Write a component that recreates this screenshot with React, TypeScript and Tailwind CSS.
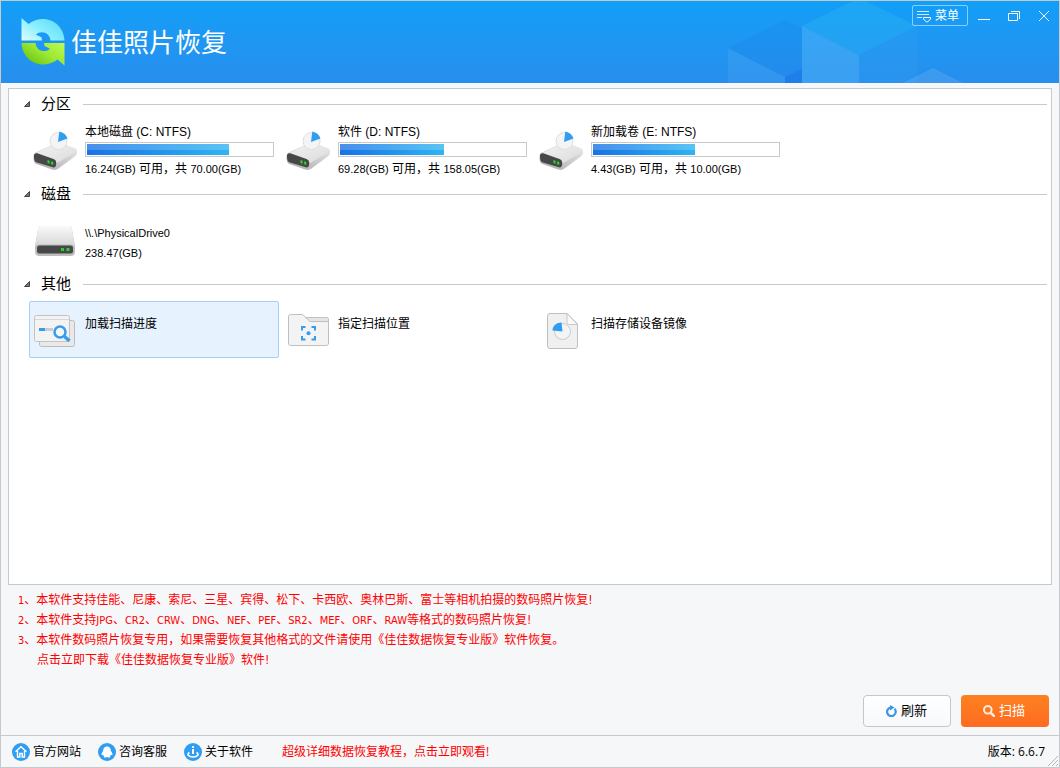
import React, { useState } from "react";

interface Volume {
  name: string;
  label: string;
  info: string;
  used: number;
}

const VOLUMES: Volume[] = [
  { name: "本地磁盘", label: "(C: NTFS)", info: "16.24(GB) 可用，共 70.00(GB)", used: 77 },
  { name: "软件", label: "(D: NTFS)", info: "69.28(GB) 可用，共 158.05(GB)", used: 56 },
  { name: "新加载卷", label: "(E: NTFS)", info: "4.43(GB) 可用，共 10.00(GB)", used: 55 },
];

const NOTES = [
  "1、本软件支持佳能、尼康、索尼、三星、宾得、松下、卡西欧、奥林巴斯、富士等相机拍摄的数码照片恢复!",
  "2、本软件支持JPG、CR2、CRW、DNG、NEF、PEF、SR2、MEF、ORF、RAW等格式的数码照片恢复!",
  "3、本软件数码照片恢复专用，如果需要恢复其他格式的文件请使用《佳佳数据恢复专业版》软件恢复。",
];

// Latin runs are set one pixel smaller than the Chinese around them.
const Mixed: React.FC<{ text: string }> = ({ text }) => (
  <>
    {text.split(/([\x22-\x7e]+)/).map((part, i) =>
      i % 2 ? (
        <span key={i} className="text-[11px] leading-none">
          {part}
        </span>
      ) : (
        part
      )
    )}
  </>
);

const Logo = () => {
  const arrow =
    "M.5 0 7.5 6C12 2.4 17 1 22 1c12 0 21 9.500 21.500 21.500H29.500C29 17.500 25.500 14.300 21 14.300c-2.500 0-4.500.7-6 2.400l5.500 2.600.5 3.200H.5z";
  return (
    <svg className="h-12 w-11 shrink-0" viewBox="0 0 44 48" aria-hidden="true">
      <defs>
        <linearGradient id="logo-top" x1="0" y1="1" x2="1" y2="0.3">
          <stop offset="0" stopColor="#e4fdff" />
          <stop offset="0.5" stopColor="#8cf0fe" />
          <stop offset="1" stopColor="#5fdcfb" />
        </linearGradient>
        {/* drawn rotated by 180 degrees, so the light end comes out top right */}
        <linearGradient id="logo-bottom" x1="0" y1="1" x2="1" y2="0.2">
          <stop offset="0" stopColor="#bdfb55" />
          <stop offset="0.5" stopColor="#9be832" />
          <stop offset="1" stopColor="#66c010" />
        </linearGradient>
      </defs>
      <path d={arrow} fill="url(#logo-top)" />
      <path d={arrow} fill="url(#logo-bottom)" transform="rotate(180 22 23.7)" />
    </svg>
  );
};

const HeaderCubes = () => (
  <svg className="absolute right-0 top-0 h-full w-[332px]" viewBox="0 0 332 82" aria-hidden="true">
    <path d="M58 19 1 47l57 29 17-8V27z" fill="#1b7fe9" fillOpacity="0.25" />
    <path d="M1 47v35h57v-6z" fill="#fff" fillOpacity="0.06" />
    <path d="M58 76v6h17V68z" fill="#1d78e8" fillOpacity="0.7" />
    <path d="M132-3 75 25l57 29 58-29z" fill="#2fb8f4" fillOpacity="0.35" />
    <path d="M75 25v57h57V54z" fill="#5cb8f8" fillOpacity="0.4" />
    <path d="M132 54v28h58V25z" fill="#2f9af0" fillOpacity="0.4" />
    <path d="m206 67-30 15h60z" fill="#fff" fillOpacity="0.1" />
  </svg>
);

const VolumeIcon = () => (
  <svg className="mt-px h-10 w-11 shrink-0" viewBox="0 0 44 40" aria-hidden="true">
    <defs>
      <linearGradient id="vol-top" x1="0" y1="0" x2="1" y2="1">
        <stop offset="0" stopColor="#f2f2f2" />
        <stop offset="1" stopColor="#dcdcdc" />
      </linearGradient>
      <linearGradient id="vol-side" x1="0" y1="1" x2="1" y2="0">
        <stop offset="0" stopColor="#a8a8a8" />
        <stop offset="1" stopColor="#ececec" />
      </linearGradient>
    </defs>
    <path d="M.5 25.500c0-2 .8-3 2.500-4L22 12.500c2-1 5-1 7 0l13 5c1.500.6 2 1.800 2 3.500 0 2.500-.8 3.500-2.500 4.800L25.500 37.500c-2 1.500-4 1.700-6.500 1L3.500 33C1 32 .5 30 .5 25.500z" fill="url(#vol-side)" />
    <path d="M2 22.500 22 12.500c2-1 5-1 7 0l13 5c2 .8 2 2.200.5 3.500L26 31c-1.500 1-3 1-4.500.5z" fill="url(#vol-top)" />
    <path d="M1 25c0-2.500 1.500-3.200 4-2.400l15.500 5.300c2 .7 2.800 2 2.700 4.500-.1 3.500-1.400 4.600-4.200 3.700L4 31.500c-2.300-.8-3-2.500-3-6.500z" fill="#474747" />
    <path d="m14.500 29 2 .7v3l-2-.7zm3.700 1.200 2 .7v3l-2-.7z" fill="#22e02c" />
    <circle cx="25.500" cy="10" r="8.500" fill="#f3f4f6" stroke="#dedfe2" />
    <path d="m25 11 1.300-10.500A11 11 0 0 1 34.500 7.500z" fill="#2f9df1" />
  </svg>
);

const DriveIcon = () => (
  <svg className="mt-px h-10 w-11 shrink-0" viewBox="0 0 44 40" aria-hidden="true">
    <defs>
      <linearGradient id="drive-top" x1="0" y1="0" x2="0" y2="1">
        <stop offset="0" stopColor="#fafafa" />
        <stop offset="1" stopColor="#d5d5d5" />
      </linearGradient>
    </defs>
    <path d="M8.500 5h27c2 0 3 1 3.400 3L42 25.500v5c0 3-1.500 4.500-4 4.500H6c-2.500 0-4-1.500-4-4.500v-5L5.100 8c.4-2 1.400-3 3.400-3z" fill="#bdbdbd" />
    <path d="M8.500 5h27c2 0 3 1 3.400 3L42 26c-1-2-2.500-2.500-4.500-2.500h-31C4.500 23.500 3 24 2 26L5.100 8c.4-2 1.400-3 3.400-3z" fill="url(#drive-top)" />
    <rect x="4" y="24.500" width="36" height="8" rx="2.500" fill="#474747" />
    <path d="M28 27h3v3h-3zm5.500 0h3v3h-3z" fill="#22d42c" />
  </svg>
);

const ProgressIcon = () => (
  <svg className="mt-px h-10 w-11 shrink-0" viewBox="0 0 44 40" aria-hidden="true">
    <rect x="6.500" y="9.500" width="35" height="26" rx="2" fill="#e9e9e9" stroke="#bcbcbc" />
    <rect x="1.500" y="4.500" width="35" height="26" rx="2" fill="#f3f3f3" stroke="#c3c3c3" />
    <path d="M2 8.500h34" stroke="#d8d8d8" />
    <path d="M6 17h6v3H6z" fill="#2f9df1" />
    <path d="M12 17h8v3h-8z" fill="#c9ccd0" />
    <circle cx="27" cy="21" r="5.500" fill="#f0f6fb" stroke="#3a9bea" strokeWidth="2.500" />
    <path d="m31.500 25.500 5 4.500" stroke="#3a9bea" strokeWidth="3.500" />
  </svg>
);

const FolderIcon = () => (
  <svg className="mt-px h-10 w-11 shrink-0" viewBox="0 0 44 40" aria-hidden="true">
    <path d="M20 6.500h21c1 0 1.500.5 1.500 1.500v7H20z" fill="#e4e4e4" stroke="#c3c3c3" />
    <path d="M2.500 6c0-1.500.7-2.500 2-2.500h12L24 10.500h17c1 0 1.500.5 1.500 1.500v20c0 1.500-.7 2.500-2 2.500h-36c-1.300 0-2-1-2-2.500z" fill="#f3f3f3" stroke="#bfbfbf" />
    <path d="M16 19.500V16h3.500m6 0H29v3.500m0 5.500v3.500h-3.500m-6 0H16V25" fill="none" stroke="#2f9df1" strokeWidth="2" />
    <circle cx="22.500" cy="22.200" r="2" fill="#2f9df1" />
  </svg>
);

const ImageFileIcon = () => (
  <svg className="mt-px h-10 w-11 shrink-0" viewBox="0 0 44 40" aria-hidden="true">
    <path d="M11 2.500h17l10.500 10.500V35c0 1.500-1 2.500-2.500 2.500H11c-1.500 0-2.500-1-2.500-2.500V5c0-1.500 1-2.500 2.500-2.500z" fill="#f0f0f0" stroke="#bfbfbf" />
    <path d="M28 2.500V11c0 1.500 1 2.500 2.500 2.500h8z" fill="#fafafa" stroke="#c6c6c6" />
    <circle cx="23.500" cy="20.500" r="8" fill="#f3f4f6" stroke="#c9c9c9" />
    <path d="M23.500 20.500 22.500 11.500c-5 0-9 3.500-9 8z" fill="#2f9df1" />
  </svg>
);

const HomeIcon = () => (
  <svg className="size-[18px]" viewBox="0 0 18 18" aria-hidden="true">
    <circle cx="9" cy="9" r="9" fill="#2f9df1" />
    <path d="m3.500 8.800 5.500-5 5.500 5M5.500 8v6h2.300v-3.500h2.400V14h2.300V8" fill="none" stroke="#fff" strokeWidth="1.400" />
  </svg>
);

const ServiceIcon = () => (
  <svg className="size-[18px]" viewBox="0 0 18 18" aria-hidden="true">
    <circle cx="9" cy="9" r="9" fill="#2f9df1" />
    <path d="M9 3.500c2.500 0 3.800 1.700 3.800 4 0 1 1.900 2.500 1.700 4.200-.1.700-.8.500-1.500 0-.2.700-.5 1-1 1.500.5.500.3 1.300-.6 1.300-1 0-1.700-.2-2.400-.6-.7.400-1.400.6-2.400.6-.9 0-1.100-.8-.6-1.300-.5-.5-.8-.8-1-1.500-.7.500-1.400.7-1.500 0-.2-1.700 1.700-3.200 1.700-4.200 0-2.300 1.300-4 3.800-4z" fill="#fff" />
  </svg>
);

const AboutIcon = () => (
  <svg className="size-[18px]" viewBox="0 0 18 18" aria-hidden="true">
    <circle cx="9" cy="9" r="9" fill="#2f9df1" />
    <path d="M8 3h2v2H8zm0 3h2v5H8z" fill="#fff" />
    <path d="M5.500 9.500c-3 1.500-1.500 4.500 3.500 4.500s6.500-3 3.500-4.500" fill="none" stroke="#fff" strokeWidth="1.600" />
  </svg>
);

interface SectionProps {
  title: string;
  children: React.ReactNode;
}

const Section: React.FC<SectionProps> = ({ title, children }) => {
  const [open, setOpen] = useState(true);

  return (
    <section className="mb-px">
      <h2 className="flex h-8 items-center gap-3 pb-0.5 pl-[14px] pr-1">
        <button
          type="button"
          aria-expanded={open}
          onClick={() => setOpen(!open)}
          className="flex items-center gap-[10px] text-[15px] leading-5"
        >
          <svg className="size-2" viewBox="0 0 8 8" aria-hidden="true">
            <path d="M6.500 1.500v5h-5z" fill="#777" stroke="#444" />
          </svg>
          {title}
        </button>
        <span className="h-px flex-1 bg-[#c8c9cc]" />
      </h2>
      {open && <div className="flex flex-wrap gap-x-[3px] px-5">{children}</div>}
    </section>
  );
};

interface ItemProps {
  icon: React.ReactNode;
  selected?: boolean;
  onClick?: () => void;
  children: React.ReactNode;
}

const Item: React.FC<ItemProps> = ({ icon, selected, onClick, children }) => (
  <button
    type="button"
    onClick={onClick}
    className={
      selected
        ? "flex h-[57px] w-[250px] gap-2 rounded-xs border border-[#a5d0f7] bg-[#e6f2fd] px-[3px] pt-2 text-left"
        : "flex h-[57px] w-[250px] gap-2 rounded-xs border border-transparent px-[3px] pt-2 text-left"
    }
  >
    {icon}
    {children}
  </button>
);

const OTHER = [
  { text: "加载扫描进度", icon: <ProgressIcon /> },
  { text: "指定扫描位置", icon: <FolderIcon /> },
  { text: "扫描存储设备镜像", icon: <ImageFileIcon /> },
];

const App: React.FC = () => {
  const [selected, setSelected] = useState("加载扫描进度");

  return (
    <div className="flex min-h-screen flex-col border border-[#c8c9cc] bg-[#f5f7f9] font-['Liberation_Sans','Noto_Sans_CJK_SC',sans-serif] text-xs text-black">
      <header className="relative flex h-[82px] items-start justify-between bg-linear-to-b from-[#109ff8] to-[#278eed] text-white">
        <HeaderCubes />
        <div className="flex items-center gap-[6px] pl-5 pt-[17px]">
          <Logo />
          <h1 className="pb-0.5 font-['Noto_Sans_CJK_SC',sans-serif] text-[26px] font-normal leading-8">佳佳照片恢复</h1>
        </div>
        <div className="relative flex items-center pr-[3px] pt-1">
          <button
            type="button"
            className="mr-1 flex h-[21px] w-14 items-center gap-1 rounded-xs border border-white/50 pl-1"
          >
            <svg className="h-4 w-[14px]" viewBox="0 0 14 16" fill="none" stroke="#fff" aria-hidden="true">
              <path d="M0 3.500h12M0 6.500h12M0 9.500h5" strokeOpacity="0.8" />
              <path d="M6.500 9.500h7V11l-3 3h-1l-3-3z" />
            </svg>
            菜单
          </button>
          <button type="button" aria-label="最小化" className="flex h-5 w-6 items-center justify-center">
            <svg className="size-3" viewBox="0 0 12 12" stroke="#fff" aria-hidden="true">
              <path d="M0 9.500h12" />
            </svg>
          </button>
          <button type="button" aria-label="还原" className="ml-[6px] flex h-5 w-6 items-center justify-center">
            <svg className="size-3" viewBox="0 0 12 12" fill="none" stroke="#fff" aria-hidden="true">
              <path d="M.5 3.500h9v7h-9zM3 1.500h8.500V9" />
            </svg>
          </button>
          <button type="button" aria-label="关闭" className="ml-[6px] flex h-5 w-6 items-center justify-center">
            <svg className="size-3" viewBox="0 0 12 12" stroke="#fff" aria-hidden="true">
              <path d="m1 1 10 10M11 1 1 11" />
            </svg>
          </button>
        </div>
      </header>

      <main className="mx-[7px] mt-[5px] flex-1 border border-[#c8c9cc] bg-white">
        <Section title="分区">
          {VOLUMES.map((v) => (
            <Item key={v.name} icon={<VolumeIcon />} selected={selected === v.name} onClick={() => setSelected(v.name)}>
              <span className="-mt-1 flex flex-col">
                <span className="h-4 leading-3">
                  {v.name} {v.label}
                </span>
                <span
                  role="progressbar"
                  aria-label={v.name}
                  aria-valuenow={v.used}
                  className="flex h-[15px] w-[189px] border border-[#c8c9cc] bg-white p-px"
                >
                  <span
                    className="bg-linear-to-r from-[#1b72e6] to-[#2fb4f3]"
                    style={{ width: `${v.used}%` }}
                  >
                    <span className="block h-1/2 bg-white/20" />
                  </span>
                </span>
                <span className="mt-1 leading-4">
                  <Mixed text={v.info} />
                </span>
              </span>
            </Item>
          ))}
        </Section>

        <Section title="磁盘">
          <Item icon={<DriveIcon />} selected={selected === "drive0"} onClick={() => setSelected("drive0")}>
            <span className="flex flex-col pt-[3px] text-[11px] leading-5">
              <span>\\.\PhysicalDrive0</span>
              <span>238.47(GB)</span>
            </span>
          </Item>
        </Section>

        <Section title="其他">
          {OTHER.map((o) => (
            <Item key={o.text} icon={o.icon} selected={selected === o.text} onClick={() => setSelected(o.text)}>
              <span className="pt-1 leading-5">{o.text}</span>
            </Item>
          ))}
        </Section>
      </main>

      <div className="mt-[5px] px-[17px] font-['DejaVu_Sans_Condensed','Noto_Sans_CJK_SC',sans-serif] leading-5 text-[#f00]">
        {NOTES.map((note) => (
          <p key={note}>
            <Mixed text={note} />
          </p>
        ))}
        <a href="#download" className="block pl-[19px]">
          点击立即下载《佳佳数据恢复专业版》软件!
        </a>
      </div>

      <div className="mb-2 mt-[25px] flex justify-end gap-[10px] px-[10px] text-[13px]">
        <button
          type="button"
          className="flex h-8 w-22 items-center justify-center gap-1 rounded-sm border border-[#c5c7cc] bg-linear-to-b from-white to-[#f8f9fb] pr-0.5"
        >
          <svg className="size-3" viewBox="0 0 12 12" aria-hidden="true">
            <path d="M9.500 3.800A4.300 4.300 0 1 1 5.500 2.600" fill="none" stroke="#3a95e4" strokeWidth="2.200" />
            <path d="M5 0v5.500L9.500 2.500z" fill="#3a95e4" />
          </svg>
          刷新
        </button>
        <button
          type="button"
          className="flex h-8 w-22 items-center justify-center gap-1 rounded-sm bg-linear-to-b from-[#fd821f] to-[#fe6a22] pr-0.5 text-white"
        >
          <svg className="size-3" viewBox="0 0 12 12" fill="none" stroke="#ffece0" aria-hidden="true">
            <circle cx="4.800" cy="4.800" r="3.800" strokeWidth="2" />
            <path d="m7.800 7.800 4 4" strokeWidth="2.500" />
          </svg>
          扫描
        </button>
      </div>

      <footer className="relative flex h-8 items-center border-t border-[#c8c9cc] px-[11px] font-['Open_Sans','Noto_Sans_CJK_SC',sans-serif]">
        <nav className="flex items-center gap-[17px]">
          <a href="#site" className="flex items-center gap-[3px]">
            <HomeIcon />
            官方网站
          </a>
          <a href="#service" className="flex items-center gap-[3px]">
            <ServiceIcon />
            咨询客服
          </a>
          <a href="#about" className="flex items-center gap-[3px]">
            <AboutIcon />
            关于软件
          </a>
        </nav>
        <a href="#tutorial" className="ml-[29px] text-[#f00]">
          超级详细数据恢复教程，点击立即观看!
        </a>
        <span className="ml-auto pr-[3px]">版本: 6.6.7</span>
        <svg className="absolute bottom-0 right-0 size-3" viewBox="0 0 12 12" stroke="#b4b6ba" aria-hidden="true">
          <path d="M1 11 11 1M5 11l6-6M9 11l2-2" />
        </svg>
      </footer>
    </div>
  );
};

export default App;
